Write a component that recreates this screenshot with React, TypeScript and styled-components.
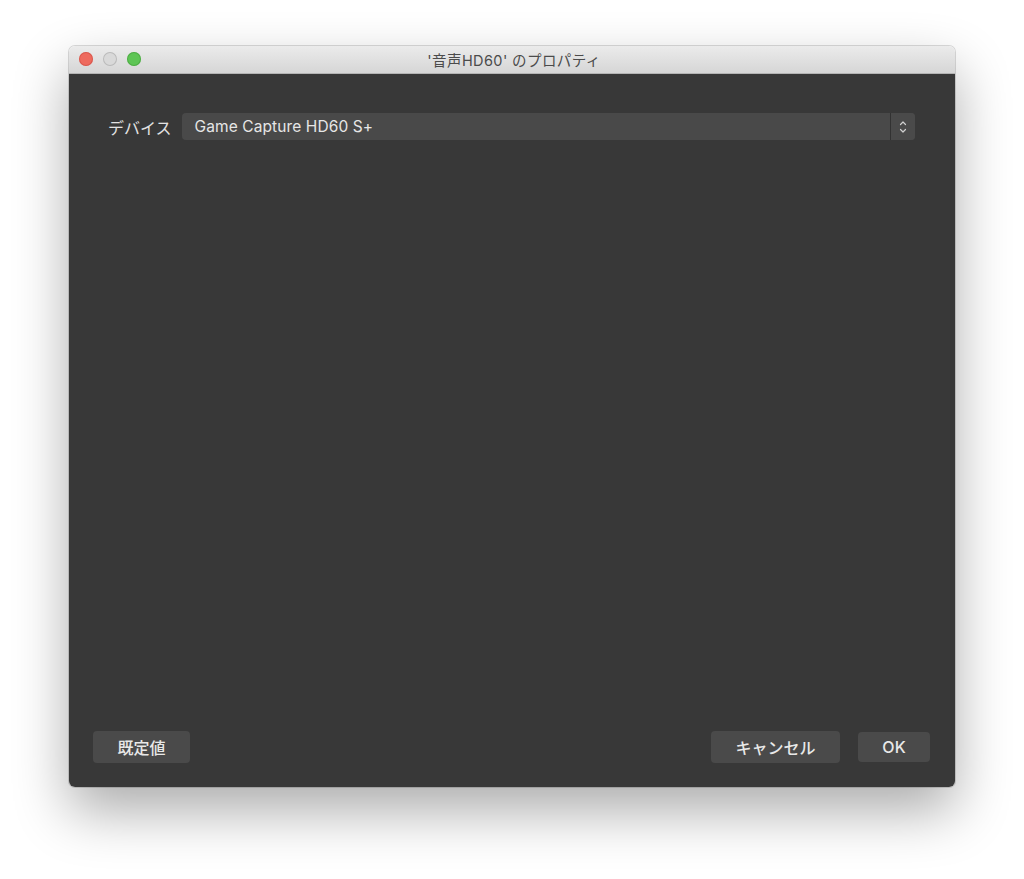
import React from "react";
import styled, { createGlobalStyle } from "styled-components";

const Global = createGlobalStyle`
  html, body { margin: 0; padding: 0; background: #ffffff; }
  body { font-family: Inter, "Noto Sans CJK JP", sans-serif; -webkit-font-smoothing: antialiased; }
`;

const Page = styled.div`
  width: 1024px;
  height: 879px;
  box-sizing: border-box;
  padding: 46px 0 0 69px;
  background: #ffffff;
`;

const Window = styled.div`
  width: 886px;
  height: 741px;
  display: flex;
  flex-direction: column;
  border-radius: 6px;
  overflow: hidden;
  box-shadow: 0 24px 55px rgba(0, 0, 0, 0.33), 0 0 0 1px rgba(0, 0, 0, 0.14);
`;

const TitleBar = styled.div`
  position: relative;
  height: 27px;
  flex: 0 0 auto;
  display: flex;
  align-items: center;
  justify-content: center;
  background: linear-gradient(#ebebeb, #d6d6d6);
  border-bottom: 1px solid #b4b4b4;
`;

const Lights = styled.div`
  position: absolute;
  left: 10px;
  top: 6px;
  display: flex;
  gap: 10px;
`;

const Light = styled.span<{ $c: string; $b: string }>`
  width: 14px;
  height: 14px;
  border-radius: 50%;
  background: ${(p) => p.$c};
  box-shadow: inset 0 0 0 1px ${(p) => p.$b};
`;

const Title = styled.div`
  font-family: Inter, "Noto Sans CJK JP", sans-serif;
  font-size: 14.5px;
  color: #4b4b4b;
  letter-spacing: 0.4px;
  padding-left: 4px;
`;

const Body = styled.div`
  flex: 1;
  background: #383838;
  display: flex;
  flex-direction: column;
  justify-content: space-between;
  padding: 39px 25px 24px 24px;
`;

const FormRow = styled.div`
  display: flex;
  align-items: center;
  gap: 10px;
  padding: 0 15px;
`;

const Label = styled.span`
  font-size: 16px;
  color: #e2e2e2;
  font-family: "Noto Sans CJK JP", sans-serif;
`;

const Select = styled.div`
  flex: 1;
  height: 27px;
  display: flex;
  align-items: stretch;
  background: #494949;
  border-radius: 4px;
  overflow: hidden;
`;

const SelectText = styled.div`
  flex: 1;
  display: flex;
  align-items: center;
  padding-left: 13px;
  font-size: 15.5px;
  letter-spacing: 0.1px;
  color: #e6e6e6;
`;

const SelectArrow = styled.div`
  width: 24px;
  display: flex;
  align-items: center;
  justify-content: center;
  border-left: 1px solid #323232;
  background: #4a4a4a;
`;

const Footer = styled.div`
  display: flex;
  align-items: center;
  gap: 18px;
`;

const Spacer = styled.div`
  flex: 1;
`;

const Button = styled.button<{ $w: number; $h: number }>`
  width: ${(p) => p.$w}px;
  height: ${(p) => p.$h}px;
  border: none;
  border-radius: 4px;
  background: #4a4a4a;
  color: #e8e8e8;
  font-family: Inter, "Noto Sans CJK JP", sans-serif;
  font-size: 16px;
  font-weight: 500;
  padding: 0;
`;

export default function App() {
  return (
    <>
      <Global />
      <Page>
        <Window>
          <TitleBar>
            <Lights>
              <Light $c="#ee6a5e" $b="rgba(200,70,60,0.5)" />
              <Light $c="#d9d9d9" $b="rgba(0,0,0,0.14)" />
              <Light $c="#5ec555" $b="rgba(60,150,50,0.5)" />
            </Lights>
            <Title>'音声HD60' のプロパティ</Title>
          </TitleBar>
          <Body>
            <FormRow>
              <Label>デバイス</Label>
              <Select>
                <SelectText>Game Capture HD60 S+</SelectText>
                <SelectArrow>
                  <svg width="10" height="14" viewBox="0 0 10 14" fill="none" stroke="#d0d0d0" strokeWidth="1.2" strokeLinecap="round" strokeLinejoin="round">
                    <path d="M2.5 4.5 L5 2 L7.5 4.5" />
                    <path d="M2.5 9.5 L5 12 L7.5 9.5" />
                  </svg>
                </SelectArrow>
              </Select>
            </FormRow>
            <Footer>
              <Button $w={97} $h={32}>既定値</Button>
              <Spacer />
              <Button $w={129} $h={32}>キャンセル</Button>
              <Button $w={72} $h={30}>OK</Button>
            </Footer>
          </Body>
        </Window>
      </Page>
    </>
  );
}
